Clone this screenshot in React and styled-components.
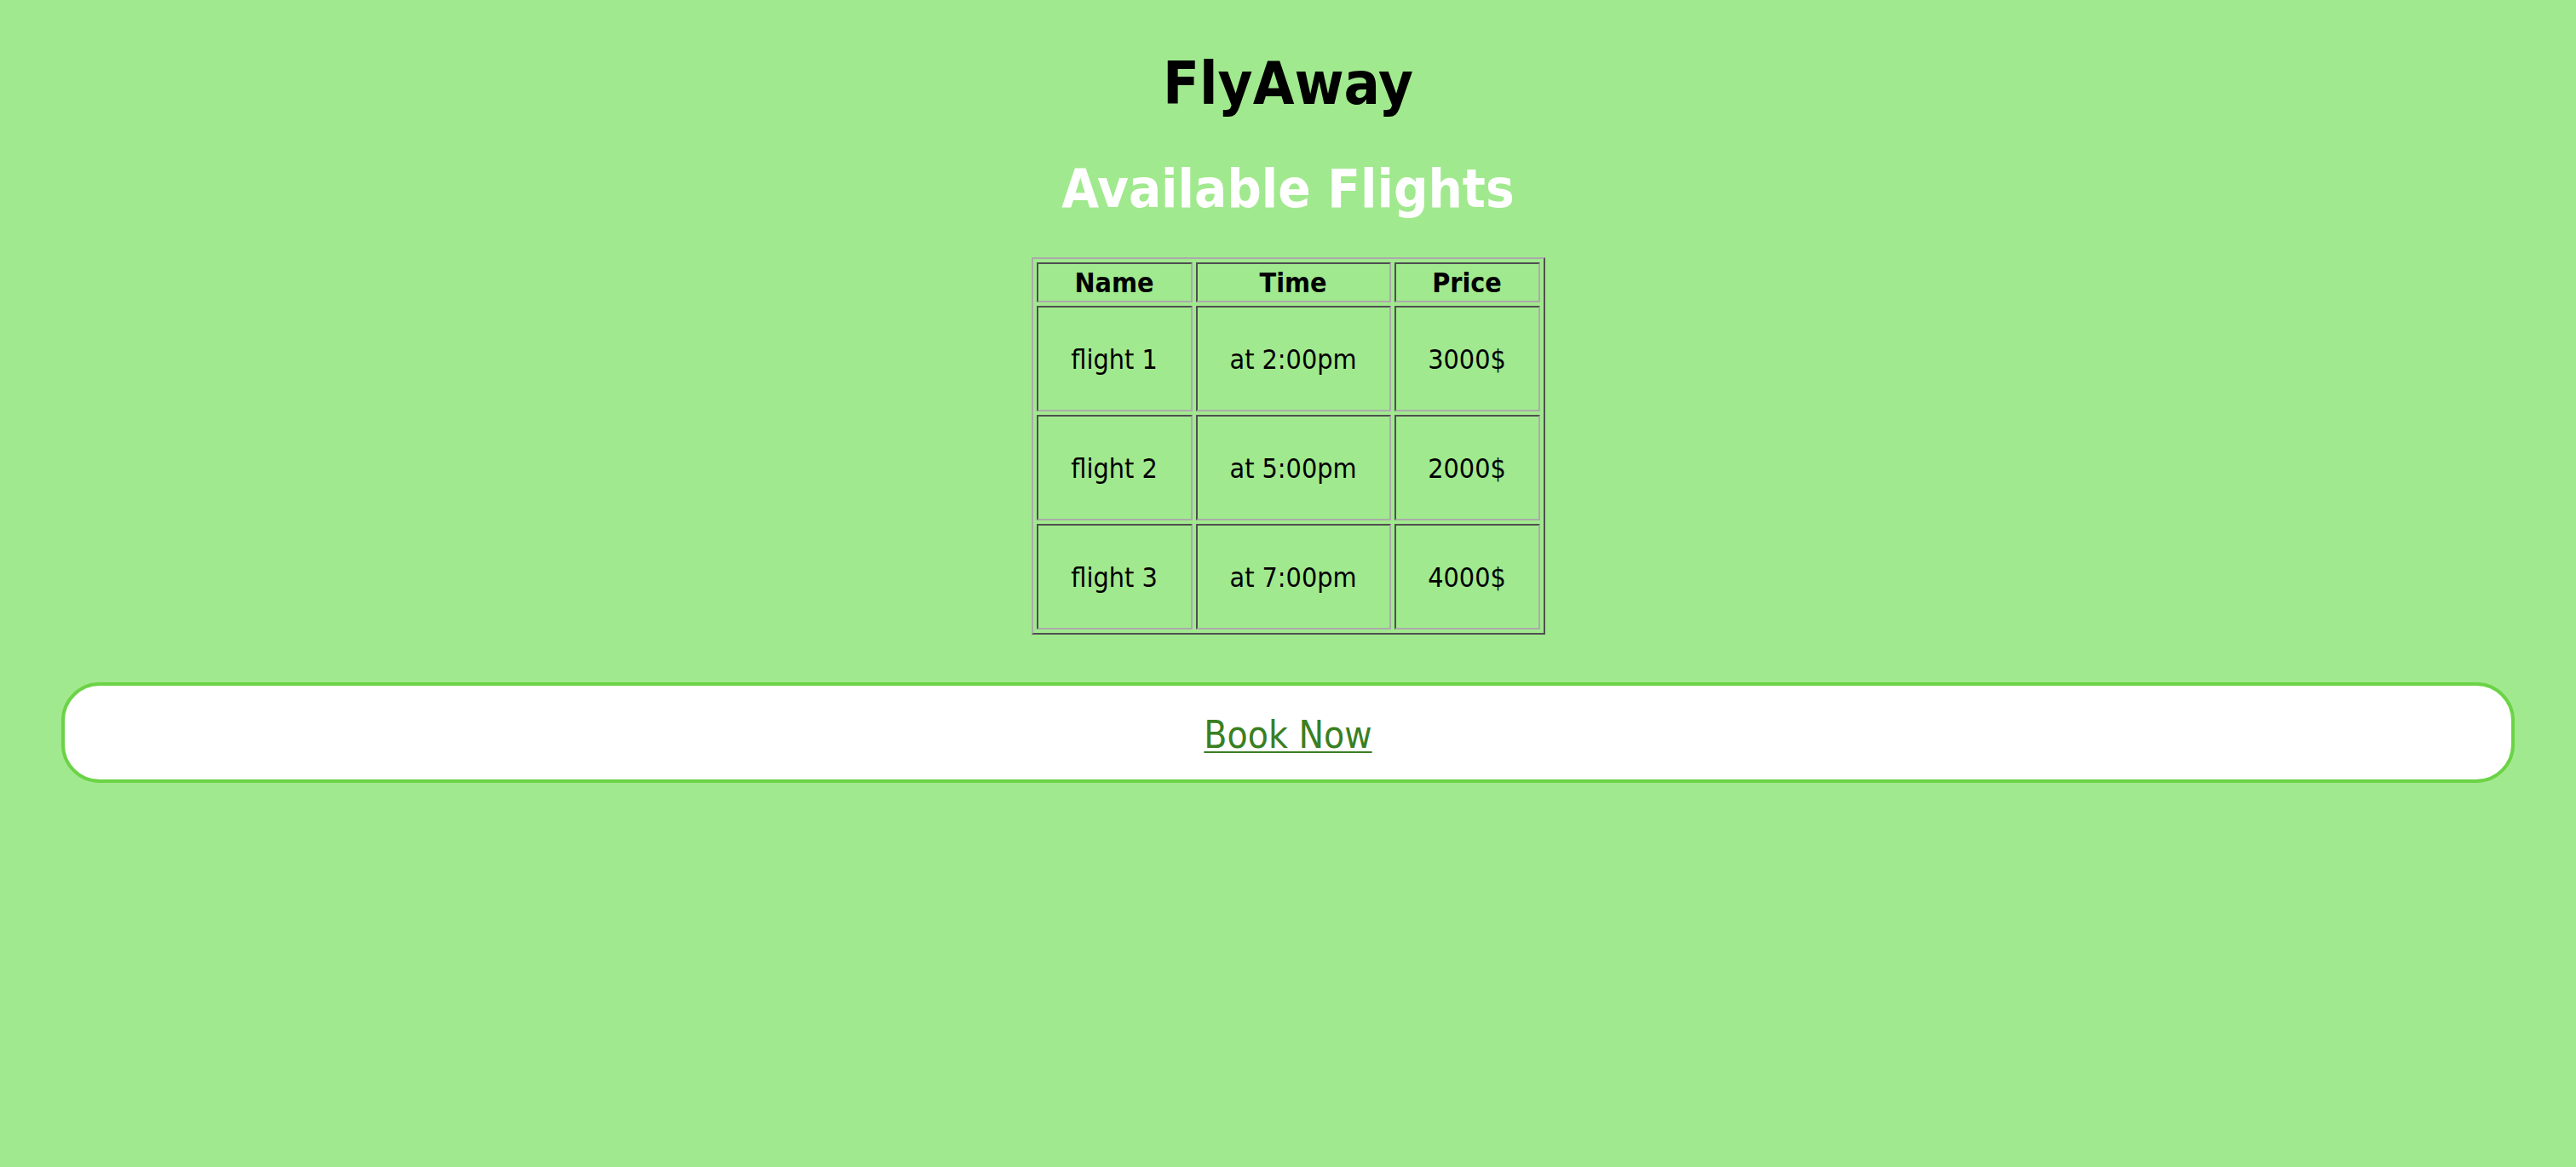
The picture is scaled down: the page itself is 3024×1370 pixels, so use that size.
import React from "react";
import styled, { createGlobalStyle } from "styled-components";

const GlobalStyle = createGlobalStyle`
  html, body {
    margin: 0;
    padding: 0;
    background-color: #a1e98e;
  }
  body {
    font-family: "DejaVu Sans Condensed", "DejaVu Sans", sans-serif;
    font-stretch: condensed;
  }
`;

const Page = styled.div`
  min-height: 100vh;
  display: flex;
  flex-direction: column;
  align-items: center;
  padding-top: 56px;
  box-sizing: border-box;
`;

const Title = styled.h1`
  margin: 0;
  font-size: 70px;
  line-height: 1.2;
  font-weight: bold;
  color: #000;
`;

const Subtitle = styled.h2`
  margin: 44px 0 0;
  font-size: 63px;
  line-height: 1.2;
  font-weight: bold;
  color: #fff;
`;

const FlightTable = styled.table`
  margin-top: 42px;
  border: 2px solid;
  border-color: #ababab #4f4f4f #4f4f4f #ababab;
  border-spacing: 4px;
  table-layout: fixed;
  width: 603px;
`;

const HeadCell = styled.th`
  border: 2px solid;
  border-color: #4f4f4f #ababab #ababab #4f4f4f;
  padding: 2px 0 1px;
  font-size: 32px;
  line-height: 40px;
  font-weight: bold;
  text-align: center;
  color: #000;
`;

const Cell = styled.td`
  border: 2px solid;
  border-color: #4f4f4f #ababab #ababab #4f4f4f;
  padding: 41px 0 39px;
  font-size: 32px;
  line-height: 40px;
  text-align: center;
  color: #000;
`;

const BookBar = styled.div`
  align-self: stretch;
  margin: 56px 72px 0;
  height: 118px;
  padding-top: 6px;
  box-sizing: border-box;
  border: 4px solid #6bd346;
  border-radius: 45px;
  background-color: #fff;
  display: flex;
  align-items: center;
  justify-content: center;
`;

const BookLink = styled.a`
  font-size: 44px;
  color: #3a7f22;
  text-decoration: underline;
  text-decoration-thickness: 2px;
  text-underline-offset: 4px;
`;

const flights = [
  { name: "flight 1", time: "at 2:00pm", price: "3000$" },
  { name: "flight 2", time: "at 5:00pm", price: "2000$" },
  { name: "flight 3", time: "at 7:00pm", price: "4000$" },
];

function App() {
  return (
    <>
      <GlobalStyle />
      <Page>
        <Title>FlyAway</Title>
        <Subtitle>Available Flights</Subtitle>
        <FlightTable>
          <colgroup>
            <col style={{ width: 183 }} />
            <col style={{ width: 229 }} />
            <col style={{ width: 171 }} />
          </colgroup>
          <thead>
            <tr>
              <HeadCell>Name</HeadCell>
              <HeadCell>Time</HeadCell>
              <HeadCell>Price</HeadCell>
            </tr>
          </thead>
          <tbody>
            {flights.map((f) => (
              <tr key={f.name}>
                <Cell>{f.name}</Cell>
                <Cell>{f.time}</Cell>
                <Cell>{f.price}</Cell>
              </tr>
            ))}
          </tbody>
        </FlightTable>
        <BookBar>
          <BookLink href="#">Book Now</BookLink>
        </BookBar>
      </Page>
    </>
  );
}

export default App;
